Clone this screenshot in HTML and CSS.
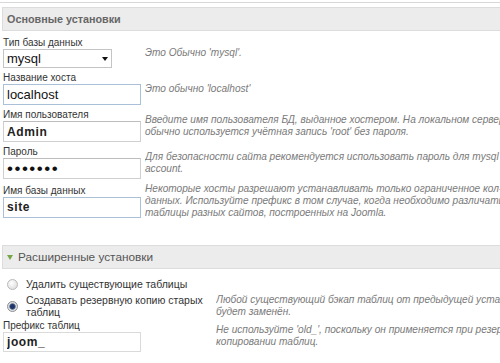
FILE: index.html
```html
<!DOCTYPE html>
<html lang="ru">
<head>
    <meta charset="UTF-8">
    <meta name="viewport" content="width=device-width, initial-scale=1.0">
    <title>Установка - Конфигурация базы данных</title>
    <link rel="stylesheet" href="styles.css">
</head>
<body>
    <div class="top-rule"></div>

    <div class="section-head">Основные установки</div>

    <div class="fields">
        <div class="field">
            <div class="field-main">
                <label class="field-label" for="dbtype">Тип базы данных</label>
                <div class="select-wrap">
                    <select class="select" id="dbtype">
                        <option>mysql</option>
                        <option>mysqli</option>
                    </select>
                </div>
            </div>
            <div class="field-desc">Это Обычно 'mysql'.</div>
        </div>

        <div class="field">
            <div class="field-main">
                <label class="field-label" for="host">Название хоста</label>
                <input class="text-input focus" id="host" type="text" value="localhost">
            </div>
            <div class="field-desc">Это обычно 'localhost'</div>
        </div>

        <div class="field">
            <div class="field-main">
                <label class="field-label" for="user">Имя пользователя</label>
                <input class="text-input strong" id="user" type="text" value="Admin">
            </div>
            <div class="field-desc">Введите имя пользователя БД, выданное хостером. На локальном сервере<br>обычно используется учётная запись 'root' без пароля.</div>
        </div>

        <div class="field">
            <div class="field-main">
                <label class="field-label" for="pass">Пароль</label>
                <input class="text-input secret" id="pass" type="password" value="1234567">
            </div>
            <div class="field-desc">Для безопасности сайта рекомендуется использовать пароль для mysql<br>account.</div>
        </div>

        <div class="field">
            <div class="field-main">
                <label class="field-label" for="dbname">Имя базы данных</label>
                <input class="text-input strong focus" id="dbname" type="text" value="site">
            </div>
            <div class="field-desc">Некоторые хосты разрешают устанавливать только ограниченное кол-во баз<br>данных. Используйте префикс в том случае, когда необходимо различать<br>таблицы разных сайтов, построенных на Joomla.</div>
        </div>
    </div>

    <div class="section-head open"><span class="toggle"></span>Расширенные установки</div>

    <div class="fields advanced">
        <div class="field">
            <label class="option">
                <input class="radio" type="radio" name="old">
                <span>Удалить существующие таблицы</span>
            </label>
            <div class="field-desc"></div>
        </div>

        <div class="field">
            <label class="option">
                <input class="radio" type="radio" name="old" checked>
                <span>Создавать резервную копию старых таблиц</span>
            </label>
            <div class="field-desc">Любой существующий бэкап таблиц от предыдущей установки<br>будет заменён.</div>
        </div>

        <div class="field tight">
            <div class="field-main">
                <label class="field-label" for="prefix">Префикс таблиц</label>
                <input class="text-input strong plain" id="prefix" type="text" value="joom_">
            </div>
            <div class="field-desc">Не используйте 'old_', поскольку он применяется при резервном<br>копировании таблиц.</div>
        </div>
    </div>
</body>
</html>
```

FILE: styles.css
```css
body {
    margin: 0;
    background: #fff;
    font-family: "Liberation Sans", Arial, sans-serif;
    font-size: 10px;
    color: #333;
    overflow: hidden;
}
.top-rule {
    height: 1px;
    margin-top: 2px;
    background: #d8d8d8;
}
.section-head {
    height: 22px;
    line-height: 22px;
    margin: 4px 0 0 2px;
    padding-left: 4px;
    background: #ececec;
    border: 1px solid #dcdcdc;
    border-right: 0;
    font-size: 10.8px;
    font-weight: bold;
    color: #666;
    white-space: nowrap;
}
.section-head.open {
    margin-top: 26px;
    font-weight: normal;
    font-size: 11.8px;
    color: #555;
}
.toggle {
    display: inline-block;
    width: 0;
    height: 0;
    margin-right: 5px;
    vertical-align: 1px;
    border-left: 3.5px solid transparent;
    border-right: 3.5px solid transparent;
    border-top: 5px solid #78a548;
}
.fields {
    margin-top: 6px;
}
.fields.advanced {
    margin-top: 9px;
}
.field {
    display: grid;
    grid-template-columns: 145px 1fr;
    align-items: center;
    margin-bottom: 4px;
}
.advanced .field {
    grid-template-columns: 216px 1fr;
}
.field.tight {
    margin-top: -2px;
}
.field-main {
    padding-left: 3px;
}
.field-label {
    display: block;
    line-height: 12px;
    color: #333;
}
.field-desc {
    font-size: 10.1px;
    font-style: italic;
    line-height: 12px;
    color: #7a7a7a;
    white-space: nowrap;
    overflow: hidden;
}
.select-wrap {
    position: relative;
    width: 109px;
}
.select-wrap::after {
    content: "";
    position: absolute;
    right: 4px;
    top: 8px;
    border-left: 3px solid transparent;
    border-right: 3px solid transparent;
    border-top: 4px solid #111;
}
.select {
    display: block;
    width: 109px;
    height: 19px;
    margin: 0;
    padding: 0 3px;
    box-sizing: border-box;
    appearance: none;
    -webkit-appearance: none;
    background: #fff;
    border: 1px solid #c4c4c4;
    border-radius: 0;
    font-family: "Liberation Sans", Arial, sans-serif;
    font-size: 13px;
    color: #111;
}
.text-input {
    display: block;
    width: 138px;
    height: 21px;
    margin: 0;
    padding: 0 3px;
    box-sizing: border-box;
    background: #fff;
    border: 1px solid #cfcfcf;
    border-top-color: #bdbdbd;
    font-family: "Liberation Sans", Arial, sans-serif;
    font-size: 13px;
    color: #111;
    outline: none;
}
.text-input.focus {
    border-color: #a9c0d8;
}
.text-input.strong {
    font-weight: bold;
    font-size: 12px;
    letter-spacing: 0.6px;
    color: #222;
}
.text-input.secret {
    font-size: 17px;
    letter-spacing: 1.5px;
}
.text-input.plain {
    height: 20px;
    border-color: #dadada;
}
.option {
    display: flex;
    align-items: center;
    gap: 8px;
    padding-left: 7px;
    padding-right: 8px;
    font-size: 10.5px;
    line-height: 12px;
    color: #333;
}
.radio {
    flex: none;
    width: 11px;
    height: 11px;
    margin: 0;
    box-sizing: border-box;
    appearance: none;
    -webkit-appearance: none;
    border: 1px solid #b8b8b8;
    border-radius: 50%;
    background: radial-gradient(circle at 40% 35%, #fff, #d6d6d6);
}
.radio:checked {
    border-color: #8d8d8d;
    background: radial-gradient(circle, #1f3566 0 2px, #5d6f92 2.8px, #d8dce2 3.6px, #eee);
}
```
